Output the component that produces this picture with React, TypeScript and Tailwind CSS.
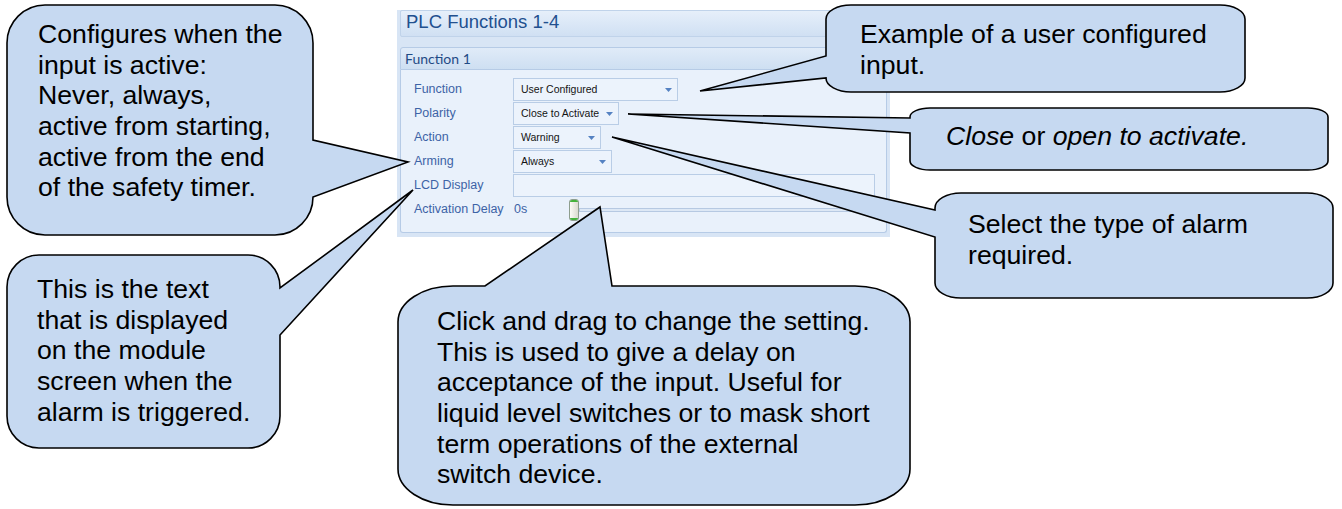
import React from 'react';

type Tail = { side: 'top' | 'right' | 'left'; a: number; b: number; tx: number; ty: number };

// rounded rectangle callout outline with the pointer folded into the same path
function bubblePath(x: number, y: number, w: number, h: number, rx: number, ry: number, t: Tail): string {
    const r = x + w;
    const btm = y + h;
    let d = `M ${x + rx} ${y} `;
    if (t.side === 'top') d += `L ${t.a} ${y} L ${t.tx} ${t.ty} L ${t.b} ${y} `;
    d += `L ${r - rx} ${y} A ${rx} ${ry} 0 0 1 ${r} ${y + ry} `;
    if (t.side === 'right') d += `L ${r} ${t.a} L ${t.tx} ${t.ty} L ${r} ${t.b} `;
    d += `L ${r} ${btm - ry} A ${rx} ${ry} 0 0 1 ${r - rx} ${btm} `;
    d += `L ${x + rx} ${btm} A ${rx} ${ry} 0 0 1 ${x} ${btm - ry} `;
    if (t.side === 'left') d += `L ${x} ${t.b} L ${t.tx} ${t.ty} L ${x} ${t.a} `;
    d += `L ${x} ${y + ry} A ${rx} ${ry} 0 0 1 ${x + rx} ${y} Z`;
    return d;
}

const bubbles = [
    bubblePath(7, 5, 306, 230, 38, 38, { side: 'right', a: 140, b: 197, tx: 408, ty: 162 }),
    bubblePath(7, 255, 273, 193, 32, 32, { side: 'right', a: 288, b: 335, tx: 413, ty: 190 }),
    bubblePath(826, 5, 419, 87, 25, 14, { side: 'left', a: 56, b: 78, tx: 700, ty: 91 }),
    bubblePath(910, 108, 418, 62, 20, 9, { side: 'left', a: 118, b: 133, tx: 628, ty: 114 }),
    bubblePath(935, 193, 398, 105, 26, 15, { side: 'left', a: 210, b: 237, tx: 612, ty: 137 }),
    bubblePath(398, 286, 512, 219, 55, 36, { side: 'top', a: 485, b: 612, tx: 600, ty: 207 }),
];

const Arrow = () => (
    <svg width="7" height="4" viewBox="0 0 7 4"><polygon points="0,0 7,0 3.5,4" fill="#5582c2" /></svg>
);

const Dropdown: React.FC<{ value: string; width: string }> = ({ value, width }) => (
    <div className={`${width} shrink-0 h-full border border-[#b9cde6] bg-[#ecf3fc] flex items-center justify-between pl-[7px] pr-[5px] text-[10.5px] text-[#141414]`}>
        <span>{value}</span>
        <Arrow />
    </div>
);

const Row: React.FC<{ label: string; children: React.ReactNode }> = ({ label, children }) => (
    <div className="flex items-center h-[23px]">
        <div className="w-[99px] shrink-0 text-[12.5px] text-[#3d63a6]">{label}</div>
        {children}
    </div>
);

const textCls = "absolute whitespace-nowrap text-[26.67px] leading-[30.67px] text-black";

export default function App() {
    return (
        <div className="relative w-[1342px] h-[509px] bg-white overflow-hidden" style={{ fontFamily: '"Liberation Sans", Arial, sans-serif' }}>
            <div className="pl-[397px] pt-[10px]">
                <div className="w-[493px] h-[227px] bg-[#d8e5f5] px-[3px] pb-[4px] flex flex-col">
                    <div className="h-[27px] border border-[#c0d3ea] rounded-[2px] bg-gradient-to-b from-[#e6effa] to-[#d0e0f3] flex items-center pl-[5px] pb-[3px] text-[18.5px] text-[#22508f]">
                        PLC Functions 1-4
                    </div>
                    <div className="mt-[10px] flex-1 flex flex-col">
                        <div className="h-[23px] border border-[#b6cbe6] rounded-t-[3px] bg-gradient-to-b from-[#e0ebf8] to-[#cedff2] flex items-center pl-[4px] text-[14px] text-[#1f4a85]" style={{ fontFamily: 'Lato, "Open Sans", sans-serif' }}>
                            Function 1
                        </div>
                        <div className="flex-1 border border-t-0 border-[#b6cbe6] rounded-b-[3px] bg-[#e9f1fb] pt-[8px] pl-[13px] flex flex-col gap-px">
                            <Row label="Function"><Dropdown value="User Configured" width="w-[165px]" /></Row>
                            <Row label="Polarity"><Dropdown value="Close to Activate" width="w-[106px]" /></Row>
                            <Row label="Action"><Dropdown value="Warning" width="w-[88px]" /></Row>
                            <Row label="Arming"><Dropdown value="Always" width="w-[99px]" /></Row>
                            <Row label="LCD Display"><div className="w-[362px] shrink-0 h-full border border-[#b9cde6] bg-[#ecf3fc]" /></Row>
                            <Row label="Activation Delay">
                                <div className="w-[56px] shrink-0 text-[12.5px] text-[#3d63a6] pl-px">0s</div>
                                <div className="w-[10px] shrink-0 h-[22px] rounded-[3px] border border-[#8e9e8e] overflow-hidden flex flex-col">
                                    <div className="h-[2px] bg-[#45b23c]" />
                                    <div className="flex-1 bg-gradient-to-r from-[#fbfbf6] to-[#dadbd0]" />
                                    <div className="h-[2px] bg-[#45b23c]" />
                                </div>
                                <div className="w-[296px] shrink-0 h-[4px] border border-[#b6c9e2] bg-[#dde8f5]" />
                            </Row>
                        </div>
                    </div>
                </div>
            </div>

            <svg className="absolute left-0 top-0" width="1342" height="509" viewBox="0 0 1342 509">
                {bubbles.map((d, i) => (
                    <path key={i} d={d} fill="#c6d9f1" stroke="#000" strokeWidth="1.6" strokeLinejoin="miter" />
                ))}
            </svg>

            <div className={`${textCls} left-[38px] top-[19px]`}>
                Configures when the<br />input is active:<br />Never, always,<br />active from starting,<br />active from the end<br />of the safety timer.
            </div>
            <div className={`${textCls} left-[37px] top-[274px]`}>
                This is the text<br />that is displayed<br />on the module<br />screen when the<br />alarm is triggered.
            </div>
            <div className={`${textCls} left-[860px] top-[19px]`}>
                Example of a user configured<br />input.
            </div>
            <div className={`${textCls} left-[946px] top-[121px]`}>
                <i>Close</i> or <i>open to activate.</i>
            </div>
            <div className={`${textCls} left-[968px] top-[209px]`}>
                Select the type of alarm<br />required.
            </div>
            <div className={`${textCls} left-[437px] top-[306px]`}>
                Click and drag to change the setting.<br />This is used to give a delay on<br />acceptance of the input. Useful for<br />liquid level switches or to mask short<br />term operations of the external<br />switch device.
            </div>
        </div>
    );
}
